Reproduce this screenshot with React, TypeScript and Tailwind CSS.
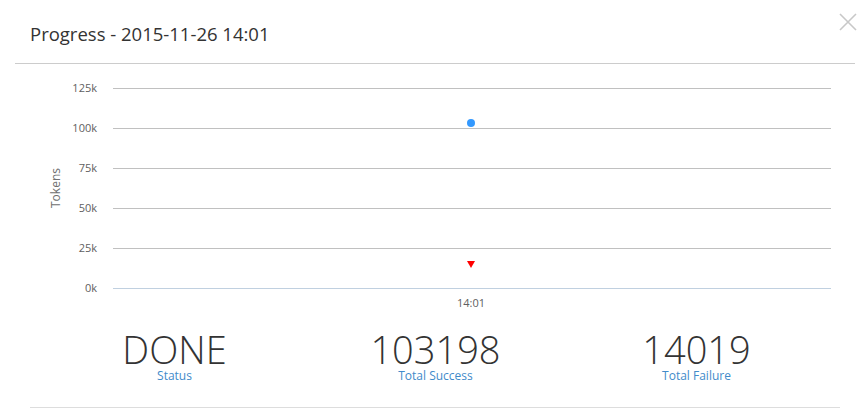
import React from "react";

const font = { fontFamily: '"Open Sans", "Noto Sans", sans-serif' };

function Chart() {
  const grid = [
    { y: 24, l: "125k" },
    { y: 64, l: "100k" },
    { y: 104, l: "75k" },
    { y: 144, l: "50k" },
    { y: 184, l: "25k" },
    { y: 224, l: "0k" },
  ];
  return (
    <svg width="868" height="252" className="block" style={font}>
      {grid.map((g, i) => (
        <g key={g.l}>
          <line
            x1="113"
            x2="831"
            y1={g.y + 0.5}
            y2={g.y + 0.5}
            stroke={i === grid.length - 1 ? "#C0D0E0" : "#C0C0C0"}
            strokeWidth="1"
          />
          <text x="97" y={g.y + 4} textAnchor="end" fontSize="11" fill="#606060">
            {g.l}
          </text>
        </g>
      ))}
      <text
        x="60"
        y="124"
        textAnchor="middle"
        fontSize="12"
        fill="#707070"
        transform="rotate(-90 60 124)"
      >
        Tokens
      </text>
      <circle cx="471" cy="59" r="4" fill="#3399FF" />
      <polygon points="467,197 475,197 471,204" fill="#FF0000" />
      <text x="471" y="243" textAnchor="middle" fontSize="11" fill="#606060">
        14:01
      </text>
    </svg>
  );
}

function Stat({ value, label }: { value: string; label: string }) {
  return (
    <div className="flex flex-col items-center">
      <div className="text-[38px] leading-[38px] font-light text-[#333333]">{value}</div>
      <div className="mt-[1px] text-[12px] leading-[14px] text-[#428bca]">{label}</div>
    </div>
  );
}

export default function App() {
  return (
    <div className="w-[868px] h-[418px] bg-white overflow-hidden" style={font}>
      <div className="relative ml-[15px] mr-[13px] h-[64px] border-b border-[#cccccc]">
        <div className="pl-[15px] pt-[21px] text-[18.5px] leading-[26px] text-[#333333]">
          Progress - 2015-11-26 14:01
        </div>
        <svg
          className="absolute right-[-2px] top-[13px]"
          width="18"
          height="18"
          viewBox="0 0 18 18"
        >
          <path d="M1 1 L17 17 M17 1 L1 17" stroke="#c8c8c8" strokeWidth="1.6" />
        </svg>
      </div>
      <Chart />
      <div className="ml-[30px] w-[810px] h-[92px] border-b border-[#dddddd]">
        <div className="grid grid-cols-3 pl-[14px] pr-[13px] pt-[14px]">
          <Stat value="DONE" label="Status" />
          <Stat value="103198" label="Total Success" />
          <Stat value="14019" label="Total Failure" />
        </div>
      </div>
    </div>
  );
}
